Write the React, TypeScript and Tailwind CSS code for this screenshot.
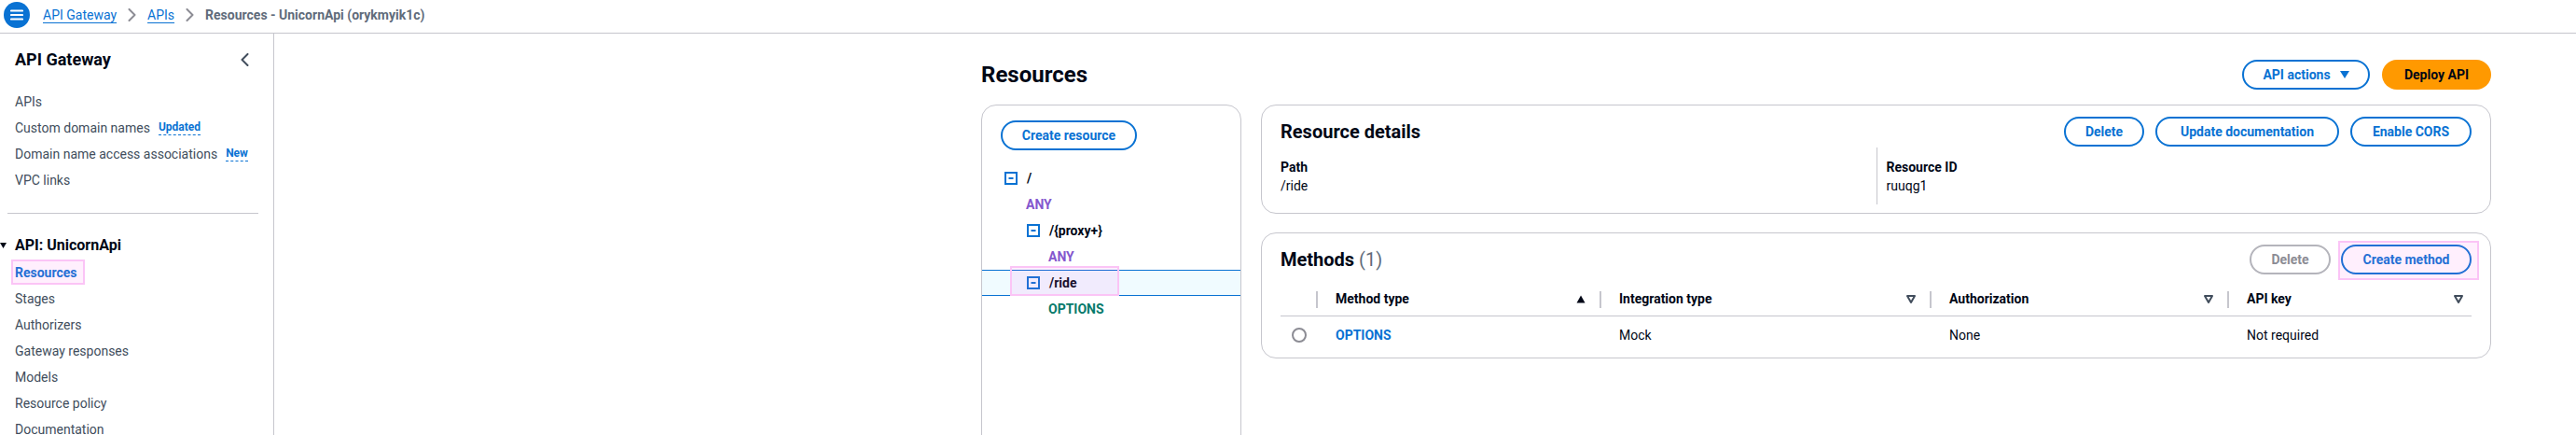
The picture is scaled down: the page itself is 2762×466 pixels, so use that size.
import React from "react";

const navTop = [
  { label: "APIs" },
  { label: "Custom domain names", badge: "Updated" },
  { label: "Domain name access associations", badge: "New" },
  { label: "VPC links" },
];

const navApi = [
  "Resources",
  "Stages",
  "Authorizers",
  "Gateway responses",
  "Models",
  "Resource policy",
  "Documentation",
  "Dashboard",
  "API settings",
];

function Chevron({ left = false }: { left?: boolean }) {
  return (
    <svg width="9" height="14" viewBox="0 0 9 14" className="shrink-0">
      <polyline
        points={left ? "7.5,1 1.5,7 7.5,13" : "1.5,1 7.5,7 1.5,13"}
        fill="none"
        stroke={left ? "#414d5c" : "#8c8c94"}
        strokeWidth="2"
        strokeLinejoin="round"
        strokeLinecap="round"
      />
    </svg>
  );
}

function TopBar() {
  return (
    <div className="flex h-[36px] items-center gap-[14px] border-b border-[#c6c6cd] pb-[3px] pl-[4px]">
      <div className="flex h-[28px] w-[28px] items-center justify-center rounded-full bg-[#0972d3]">
        <svg width="14" height="12" viewBox="0 0 14 12">
          <line x1="1" y1="1.5" x2="13" y2="1.5" stroke="white" strokeWidth="2.2" strokeLinecap="round" />
          <line x1="1" y1="6" x2="13" y2="6" stroke="white" strokeWidth="2.2" strokeLinecap="round" />
          <line x1="1" y1="10.5" x2="13" y2="10.5" stroke="white" strokeWidth="2.2" strokeLinecap="round" />
        </svg>
      </div>
      <nav className="flex items-center gap-[12px] leading-[28px]">
        <a className="text-[#0972d3] underline underline-offset-[3px]">API Gateway</a>
        <Chevron />
        <a className="text-[#0972d3] underline underline-offset-[3px]">APIs</a>
        <Chevron />
        <span className="font-bold text-[#5f6b7a]">Resources - UnicornApi (orykmyik1c)</span>
      </nav>
    </div>
  );
}

function SideNav() {
  return (
    <aside className="h-[calc(100vh-36px)] w-[294px] shrink-0 border-r border-[#c6c6cd]">
      <div className="flex h-[24px] items-center justify-between pl-[16px] pr-[26px] mt-[16px]">
        <span className="text-[18px] font-bold leading-[24px] text-[#000716]">API Gateway</span>
        <Chevron left />
      </div>
      <ul className="mt-[19px]">
        {navTop.map((item) => (
          <li key={item.label} className="flex h-[28px] items-center gap-[9px] pl-[16px] text-[#414d5c]">
            {item.label}
            {item.badge && (
              <span className="border-b border-dashed border-[#0972d3] text-[12px] font-bold leading-[15px] text-[#0972d3]">
                {item.badge}
              </span>
            )}
          </li>
        ))}
      </ul>
      <div className="ml-[8px] mr-[16px] mt-[21px] h-px bg-[#c6c6cd]" />
      <div className="mt-[22px] flex h-[24px] items-center gap-[9px]">
        <svg width="7" height="6" viewBox="0 0 7 6">
          <polygon points="0,0 7,0 3.5,6" fill="#000716" />
        </svg>
        <span className="text-[16px] font-bold text-[#000716]">API: UnicornApi</span>
      </div>
      <ul className="mt-[3px]">
        {navApi.map((label) => (
          <li key={label} className="flex h-[28px] items-center pl-[16px]">
            {label === "Resources" ? (
              <span className="relative font-bold text-[#0972d3]">
                Resources
                <span className="pointer-events-none absolute -left-[4px] -top-[4px] h-[27px] w-[79px] border-2 border-[#fbc4f6] bg-[#ff66f0]/10" />
              </span>
            ) : (
              <span className="text-[#414d5c]">{label}</span>
            )}
          </li>
        ))}
      </ul>
    </aside>
  );
}

function OutlineButton({ label, className }: { label: string; className: string }) {
  return (
    <button
      className={
        "flex h-[32px] items-center justify-center rounded-full border-2 border-[#0972d3] bg-white font-bold text-[#0972d3] " +
        className
      }
    >
      {label}
    </button>
  );
}

function TreeIcon() {
  return (
    <svg width="14" height="14" viewBox="0 0 14 14" className="shrink-0">
      <rect x="1" y="1" width="12" height="12" fill="none" stroke="#0972d3" strokeWidth="2" />
      <line x1="4.5" y1="7" x2="9.5" y2="7" stroke="#0972d3" strokeWidth="2" />
    </svg>
  );
}

function ResourceTree() {
  return (
    <div className="h-[420px] w-[279px] shrink-0 rounded-[16px] border border-[#c6c6cd] px-[20px] pt-[16px]">
      <OutlineButton label="Create resource" className="w-[146px]" />
      <div className="mt-[16px]">
        <div className="flex h-[28px] items-center gap-[10px] pl-[4px] font-bold">
          <TreeIcon />/
        </div>
        <div className="flex h-[28px] items-center pl-[27px] font-bold text-[#8456ce]">ANY</div>
        <div className="flex h-[28px] items-center gap-[10px] pl-[28px] font-bold">
          <TreeIcon />/&#123;proxy+&#125;
        </div>
        <div className="flex h-[28px] items-center pl-[51px] font-bold text-[#8456ce]">ANY</div>
        <div className="relative -mx-[20px] flex h-[28px] items-center gap-[10px] border-y border-[#0972d3] bg-[#f0fbff] pl-[48px] font-bold">
          <TreeIcon />/ride
          <span className="pointer-events-none absolute left-[30px] -top-[5px] h-[32px] w-[117px] border-2 border-[#fbc4f6] bg-[#ff66f0]/10" />
        </div>
        <div className="flex h-[28px] items-center pl-[51px] font-bold text-[#067a6b]">OPTIONS</div>
      </div>
    </div>
  );
}

function ResourceDetails() {
  return (
    <section className="rounded-[16px] border border-[#c6c6cd] px-[20px] pb-[9px] pt-[12px]">
      <div className="flex h-[32px] items-center justify-between">
        <h2 className="text-[20px] font-bold text-[#000716]">Resource details</h2>
        <div className="flex gap-[12px]">
          <OutlineButton label="Delete" className="w-[86px]" />
          <OutlineButton label="Update documentation" className="w-[197px]" />
          <OutlineButton label="Enable CORS" className="w-[130px]" />
        </div>
      </div>
      <div className="mt-px grid grid-cols-2">
        <div className="pb-[10px] pt-[11px] leading-[20px]">
          <div className="font-bold">Path</div>
          <div>/ride</div>
        </div>
        <div className="border-l border-[#c6c6cd] pb-[10px] pl-[10px] pt-[11px] leading-[20px]">
          <div className="font-bold">Resource ID</div>
          <div>ruuqg1</div>
        </div>
      </div>
    </section>
  );
}

function SortUp() {
  return (
    <svg width="10" height="9" viewBox="0 0 10 9" className="shrink-0">
      <polygon points="5,0.5 9.5,8.5 0.5,8.5" fill="#000716" />
    </svg>
  );
}

function SortDown() {
  return (
    <svg width="10" height="9" viewBox="0 0 10 9" className="shrink-0">
      <polygon points="1,1 9,1 5,8" fill="none" stroke="#414d5c" strokeWidth="2" strokeLinejoin="round" />
    </svg>
  );
}

function HeaderCell({ label, sort, last = false }: { label: string; sort: "up" | "down"; last?: boolean }) {
  return (
    <div className={last ? "flex items-center pr-[9px]" : "flex items-center pr-[15px]"}>
      <div className="h-[18px] w-[2px] bg-[#c6c6cd]" />
      <span className="ml-[19px] flex-1 font-bold text-[#000716]">{label}</span>
      {sort === "up" ? <SortUp /> : <SortDown />}
    </div>
  );
}

function Methods() {
  return (
    <section className="rounded-[16px] border border-[#c6c6cd] px-[20px] pb-[4px] pt-[12px]">
      <div className="flex h-[32px] items-center justify-between">
        <h2 className="text-[20px] font-bold text-[#000716]">
          Methods <span className="font-normal text-[#5f6b7a]">(1)</span>
        </h2>
        <div className="flex gap-[11px]">
          <button className="flex h-[32px] w-[87px] items-center justify-center rounded-full border-2 border-[#b4b4bb] font-bold text-[#8c8c94]">
            Delete
          </button>
          <div className="relative">
            <OutlineButton label="Create method" className="w-[140px]" />
            <span className="pointer-events-none absolute -left-[3px] -top-[4px] h-[42px] w-[151px] border-2 border-[#fbc4f6] bg-[#ff66f0]/10" />
          </div>
        </div>
      </div>
      <div className="mt-[9px] grid h-[36px] grid-cols-[38px_304px_354px_319px_1fr] border-b border-[#c6c6cd]">
        <div />
        <HeaderCell label="Method type" sort="up" />
        <HeaderCell label="Integration type" sort="down" />
        <HeaderCell label="Authorization" sort="down" />
        <HeaderCell label="API key" sort="down" last />
      </div>
      <div className="grid h-[40px] grid-cols-[38px_304px_354px_319px_1fr] items-center">
        <div className="pl-[12px]">
          <div className="h-[16px] w-[16px] rounded-full border-2 border-[#8c8c94]" />
        </div>
        <div className="pl-[21px] font-bold text-[#0972d3]">OPTIONS</div>
        <div className="pl-[21px]">Mock</div>
        <div className="pl-[21px]">None</div>
        <div className="pl-[21px]">Not required</div>
      </div>
    </section>
  );
}

export default function App() {
  return (
    <div className="h-screen overflow-hidden bg-white font-['Roboto',sans-serif] text-[14px] text-[#000716]">
      <TopBar />
      <div className="flex">
        <SideNav />
        <main className="flex-1">
          <div className="ml-[758px] w-[1619px] pt-[28px]">
            <div className="flex h-[32px] items-center justify-between">
              <h1 className="text-[24px] font-bold leading-[32px] text-[#000716]">Resources</h1>
              <div className="flex gap-[13px]">
                <button className="flex h-[32px] w-[137px] items-center justify-center gap-[10px] rounded-full border-2 border-[#0972d3] font-bold text-[#0972d3]">
                  API actions
                  <svg width="10" height="8" viewBox="0 0 10 8">
                    <polygon points="0,0 10,0 5,8" fill="#0972d3" />
                  </svg>
                </button>
                <button className="flex h-[32px] w-[117px] items-center justify-center rounded-full bg-[#ff9900] font-bold text-[#000716]">
                  Deploy API
                </button>
              </div>
            </div>
            <div className="mt-[16px] flex gap-[21px]">
              <ResourceTree />
              <div className="flex flex-1 flex-col gap-[20px]">
                <ResourceDetails />
                <Methods />
              </div>
            </div>
          </div>
        </main>
      </div>
    </div>
  );
}
